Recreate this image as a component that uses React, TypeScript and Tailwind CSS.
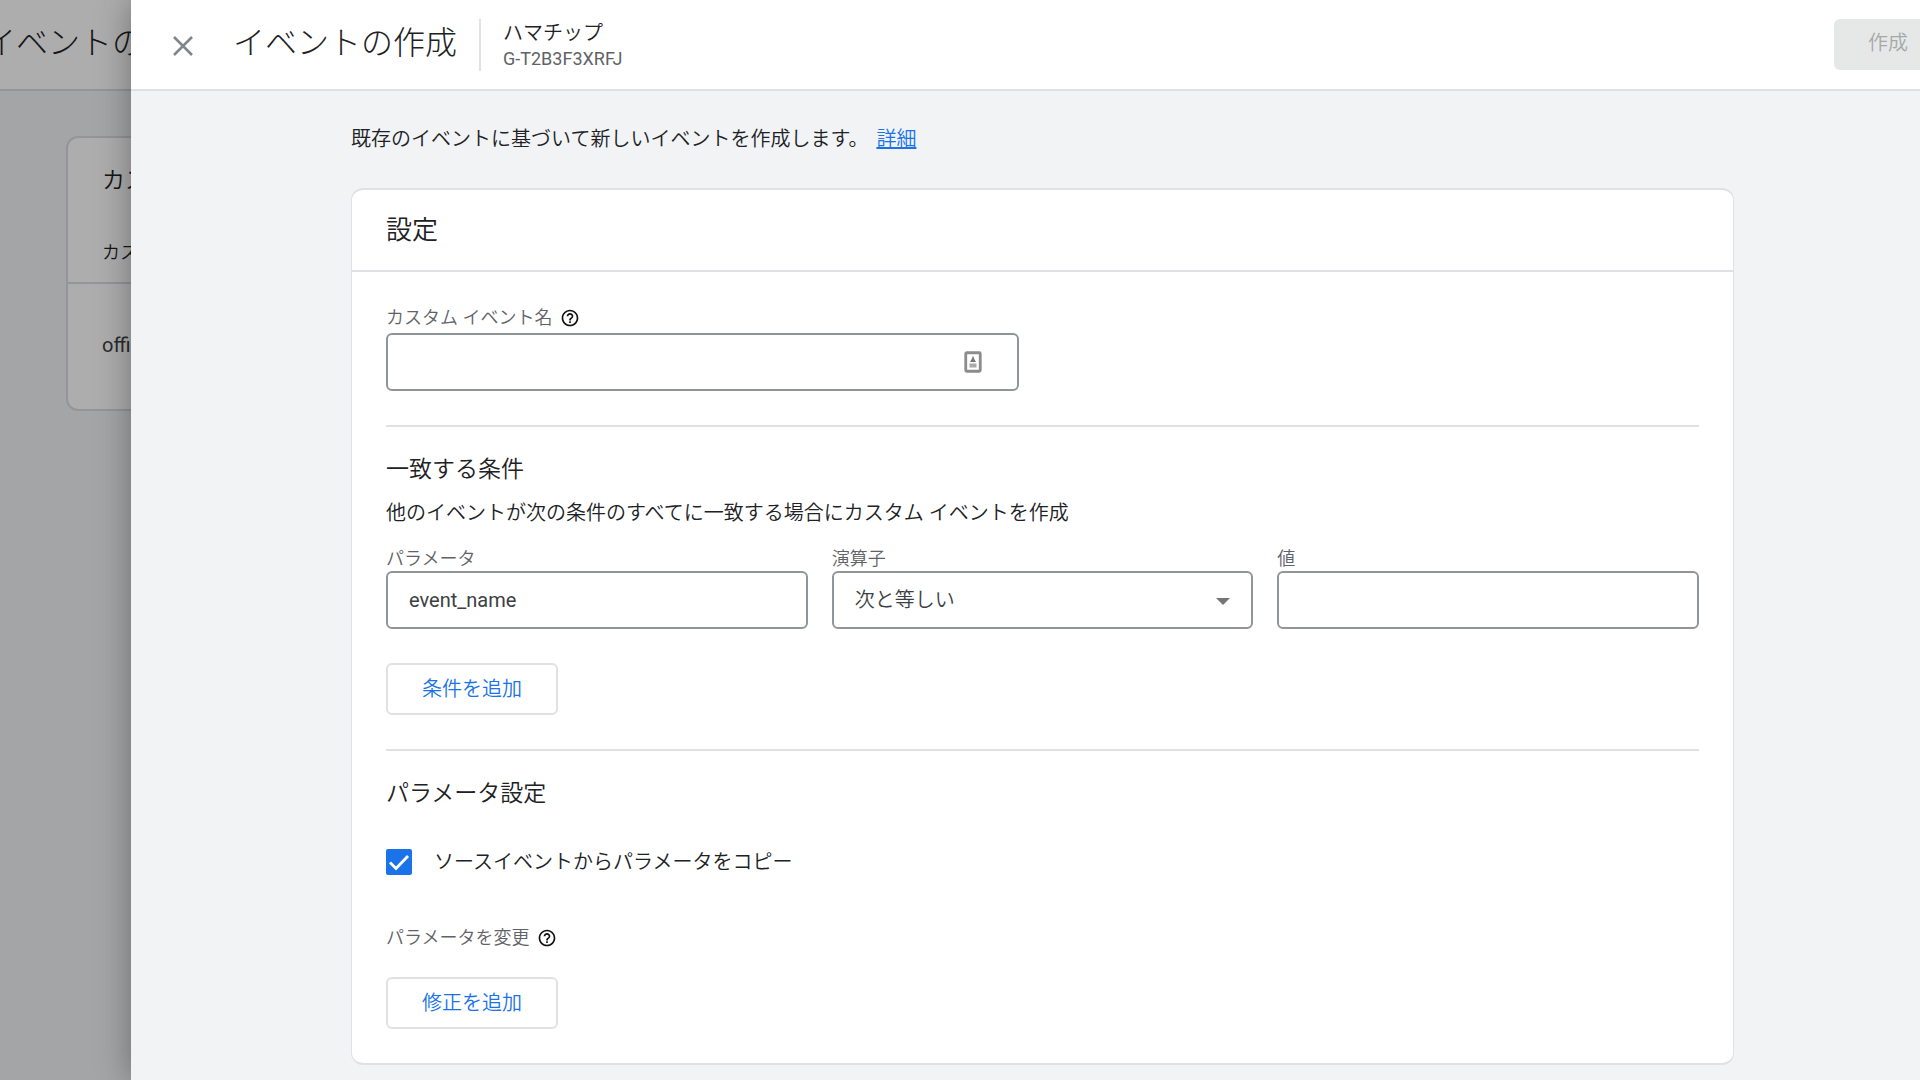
import { useState, type ReactNode } from "react";
import { MdHelpOutline } from "react-icons/md";

function HelpIcon() {
  return (
    <button type="button" aria-label="ヘルプ" className="flex size-5 items-center justify-center text-[#111]">
      <MdHelpOutline className="size-5" />
    </button>
  );
}

function ContactIcon() {
  return (
    <svg viewBox="0 0 18 22" className="h-[22px] w-[18px]" aria-hidden="true">
      <rect x="1.75" y="1.75" width="14.5" height="18.5" rx="1" fill="#fff" stroke="#8c8c8c" strokeWidth="2.8" />
      <path d="M9 4.5 L10 7.5 L12 11 H6 L8 7.5 Z" fill="#777" />
      <rect x="5.5" y="12.5" width="7" height="4" fill="#aaa" />
    </svg>
  );
}

function OutlineButton({ children }: { children: ReactNode }) {
  return (
    <button
      type="button"
      className="h-[52px] self-start rounded-md border-2 border-[#dfe1e5] bg-white px-[34px] text-[20px] leading-6 font-[350] text-[#1a73e8]"
    >
      {children}
    </button>
  );
}

const fieldClass =
  "h-[58px] w-full rounded-md border-2 border-[#8f959b] bg-white px-[21px] text-[20px] text-[#3c4043] outline-none focus:border-[#1a73e8]";
const labelClass = "text-[18px] leading-6 font-[350] text-[#5f6368]";

function BackgroundPage() {
  return (
    <div aria-hidden="true" className="absolute inset-0 overflow-hidden bg-[#f1f3f6]">
      <div className="flex h-[91px] items-center border-b-2 border-[#dadce0] bg-white pb-1">
        <div className="-ml-4 whitespace-nowrap text-[32px] leading-10 font-light text-[#202124]">イベントの作成</div>
      </div>
      <div className="mt-[45px] ml-[66px] h-[275px] rounded-xl border-2 border-[#dadce0] bg-white">
        <div className="flex h-[146px] flex-col justify-between border-b-2 border-[#dadce0] px-[34px] pt-[27px] pb-[17px] font-[350] text-[#202124]">
          <div className="text-[23px] leading-8">カスタム イベント</div>
          <div className="text-[18px] leading-6">カスタム イベント名</div>
        </div>
        <div className="flex h-[122px] items-center px-[34px] text-[20px] text-[#3c4043]">official_event</div>
      </div>
      <div className="absolute inset-0 bg-black/32" />
    </div>
  );
}

export default function App() {
  const [name, setName] = useState("");
  const [param, setParam] = useState("event_name");
  const [value, setValue] = useState("");
  const [copy, setCopy] = useState(true);

  return (
    <div
      lang="ja"
      className="relative min-h-screen overflow-hidden font-['Roboto','Noto_Sans_CJK_JP',sans-serif] font-normal"
    >
      <BackgroundPage />
      <div
        role="dialog"
        aria-labelledby="dialog-title"
        className="relative ml-[131px] min-h-screen bg-[#f1f3f5] shadow-[0_0_32px_rgba(0,0,0,0.35)]"
      >
        <header className="flex h-[91px] items-start border-b-2 border-[#dfe1e5] bg-white pt-[19px] pl-9">
          <button type="button" aria-label="閉じる" className="mt-[11px] flex size-8 items-center justify-center">
            <svg viewBox="0 0 20 20" className="size-5" aria-hidden="true">
              <path d="M1 1 L19 19 M19 1 L1 19" stroke="#80868b" strokeWidth="2.6" fill="none" />
            </svg>
          </button>
          <h1 id="dialog-title" className="mt-1 ml-[34px] text-[32px] leading-10 font-light text-[#202124]">
            イベントの作成
          </h1>
          <div className="ml-[22px] flex h-[52px] flex-col justify-center border-l-2 border-[#dfe1e5] pl-[22px]">
            <div className="text-[20px] leading-7 font-[350] text-[#202124]">ハマチップ</div>
            <div className="text-[18px] leading-6 text-[#5f6368]">G-T2B3F3XRFJ</div>
          </div>
          <button
            type="button"
            disabled
            className="ml-auto h-[51px] rounded-l-md bg-[#e6e8e8] pr-3 pb-1 pl-[34px] text-[20px] leading-6 font-[350] text-[#a5a8ab]"
          >
            作成
          </button>
        </header>

        <main className="flex flex-col pt-8 pr-[186px] pb-4 pl-[220px]">
          <p className="text-[20px] leading-8 font-[350] text-[#202124]">
            既存のイベントに基づいて新しいイベントを作成します。
            <a href="#details" className="ml-2 text-[#1a73e8] underline">
              詳細
            </a>
          </p>

          <section className="mt-[33px] rounded-xl border-x border-y-2 border-[#dfe1e5] bg-white">
            <h2 className="flex h-[82px] items-center border-b-2 border-[#dfe1e5] px-[34px] text-[26px] leading-8 font-[350] text-[#202124]">
              設定
            </h2>

            <div className="flex flex-col px-[34px] py-[34px]">
              <div className="flex items-center gap-2">
                <label htmlFor="event-name" className={labelClass}>
                  カスタム イベント名
                </label>
                <HelpIcon />
              </div>
              <div className="relative mt-[3px] w-[633px] max-w-full">
                <input
                  id="event-name"
                  type="text"
                  value={name}
                  onChange={(e) => setName(e.target.value)}
                  className={fieldClass}
                />
                <span className="pointer-events-none absolute inset-y-0 right-[37px] flex items-center">
                  <ContactIcon />
                </span>
              </div>

              <hr className="mt-[34px] border-t-2 border-[#dfe1e5]" />

              <h3 className="mt-[27px] text-[23px] leading-8 font-[350] text-[#202124]">一致する条件</h3>
              <p className="mt-[11px] text-[20px] leading-8 font-[350] text-[#202124]">
                他のイベントが次の条件のすべてに一致する場合にカスタム イベントを作成
              </p>

              <div className="mt-[18px] grid grid-cols-3 gap-6">
                <div className="flex flex-col">
                  <label htmlFor="param" className={labelClass}>
                    パラメータ
                  </label>
                  <input
                    id="param"
                    type="text"
                    value={param}
                    onChange={(e) => setParam(e.target.value)}
                    className={fieldClass}
                  />
                </div>
                <div className="flex flex-col">
                  <label htmlFor="operator" className={labelClass}>
                    演算子
                  </label>
                  <div className="relative">
                    <select id="operator" defaultValue="eq" className={`${fieldClass} appearance-none font-[350]`}>
                      <option value="eq">次と等しい</option>
                      <option value="contains">次を含む</option>
                    </select>
                    <svg
                      viewBox="0 0 14 7"
                      className="pointer-events-none absolute top-[27px] right-[23px] h-[7px] w-3.5"
                      aria-hidden="true"
                    >
                      <path d="M0 0 H14 L7 7 Z" fill="#757575" />
                    </svg>
                  </div>
                </div>
                <div className="flex flex-col">
                  <label htmlFor="value" className={labelClass}>
                    値
                  </label>
                  <input
                    id="value"
                    type="text"
                    value={value}
                    onChange={(e) => setValue(e.target.value)}
                    className={fieldClass}
                  />
                </div>
              </div>

              <div className="mt-[34px] flex">
                <OutlineButton>条件を追加</OutlineButton>
              </div>

              <hr className="mt-[34px] border-t-2 border-[#dfe1e5]" />

              <h3 className="mt-[27px] text-[23px] leading-8 font-[350] text-[#202124]">パラメータ設定</h3>
              <div className="mt-9 flex items-center gap-[22px]">
                <span className="relative flex size-[26px]">
                  <input
                    id="copy"
                    type="checkbox"
                    checked={copy}
                    onChange={(e) => setCopy(e.target.checked)}
                    className="size-[26px] appearance-none rounded-xs border-2 border-[#5f6368] checked:border-[#1a73e8] checked:bg-[#1a73e8]"
                  />
                  {copy && (
                    <svg
                      viewBox="0 0 26 26"
                      className="pointer-events-none absolute inset-0 size-[26px]"
                      aria-hidden="true"
                    >
                      <path d="M4 13.5 L10 19.5 L22 7" fill="none" stroke="#fff" strokeWidth="2.8" />
                    </svg>
                  )}
                </span>
                <label htmlFor="copy" className="text-[20px] leading-8 font-[350] text-[#202124]">
                  ソースイベントからパラメータをコピー
                </label>
              </div>

              <div className="mt-12 flex items-center gap-2">
                <span className={labelClass}>パラメータを変更</span>
                <HelpIcon />
              </div>
              <div className="mt-[27px] flex">
                <OutlineButton>修正を追加</OutlineButton>
              </div>
            </div>
          </section>
        </main>
      </div>
    </div>
  );
}
